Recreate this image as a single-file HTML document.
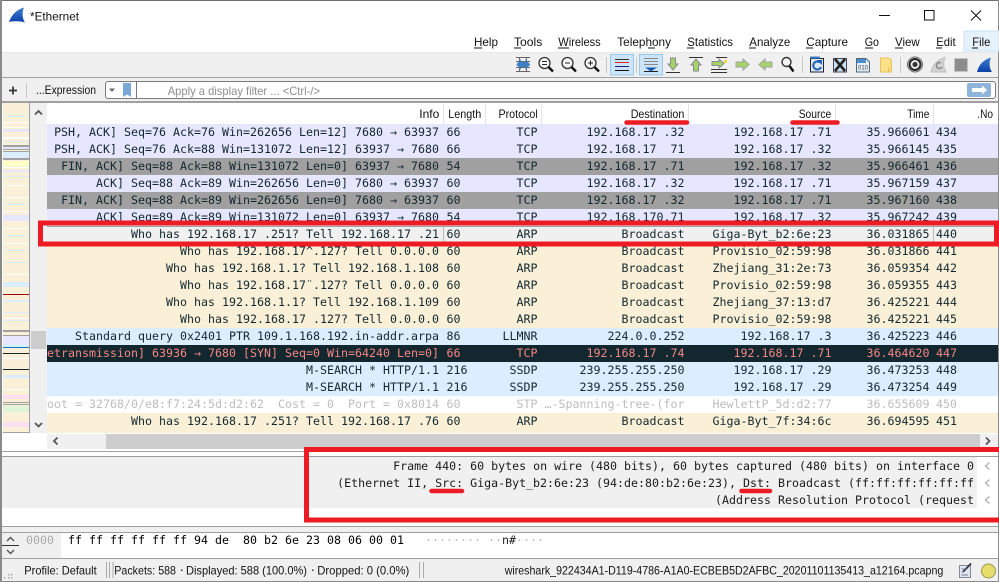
<!DOCTYPE html>
<html><head><meta charset="utf-8"><title>*Ethernet</title>
<style>
html,body{margin:0;padding:0;background:#fff}
#w{position:relative;width:999px;height:582px;overflow:hidden;background:#fff;font-family:"DejaVu Sans Mono","Liberation Mono",monospace;font-size:11.63px;color:#12272e}
.b{position:absolute}
.r{position:absolute;left:47px;width:951px;height:17px;overflow:hidden;line-height:17px;white-space:pre}
.r span{position:absolute;top:0;white-space:pre}
.i{right:559px}.l{left:399.5px}.p{right:460.5px}.d{right:313.5px}.s{right:166.5px}.t{right:68.5px}.n{left:889px}
.tc{background:#e7e6ff}.gr{background:#a0a0a0}.se{background:#f0f0f0;box-shadow:inset 0 1px 0 #a0a0a0}.ar{background:#faf0d7}.ud{background:#daeeff}.da{background:#12272e;color:#f78787}.st{background:#fff;color:#bdbdbd}
.x{position:absolute;white-space:pre;line-height:17px;color:#1a1a1a}
svg{position:absolute;left:0;top:0}
svg text{font-family:"Liberation Sans",sans-serif;font-size:12px;fill:#111}
</style></head><body><div id="w">
<div class="b" style="left:0;top:52px;width:999px;height:25px;background:#f0f0f0;border-top:1px solid #e6e6e6;box-sizing:border-box"></div>
<div class="b" style="left:0;top:77px;width:999px;height:26px;background:#f0f0f0;border-top:1px solid #a0a0a0;border-bottom:2px solid #a0a0a0;box-sizing:border-box"></div>
<div class="b" style="left:105px;top:81px;width:891px;height:18px;background:#fff;border:1px solid #7a7a7a;border-radius:3px;box-sizing:border-box"></div>
<div class="b" style="left:30px;top:103px;width:17px;height:330px;background:#f0f0f0"></div>
<div class="b" style="left:31px;top:331px;width:15px;height:18px;background:#cdcdcd"></div>
<div class="b" style="left:47px;top:434px;width:951px;height:15px;background:#f0f0f0"></div>
<div class="b" style="left:106px;top:434px;width:874px;height:15px;background:#cdcdcd"></div>
<div class="b" style="left:0;top:451px;width:999px;height:1px;background:#a0a0a0"></div>
<div class="b" style="left:0;top:456px;width:999px;height:1px;background:#9a9aa0"></div>
<div class="b" style="left:2px;top:457px;width:975px;height:51px;background:#f0f0f0"></div>
<div class="b" style="left:0;top:526px;width:999px;height:7px;background:#f0f0f0;border-top:1px solid #a0a0a0;border-bottom:1px solid #a0a0a0;box-sizing:border-box"></div>
<div class="b" style="left:2px;top:533px;width:59px;height:25px;background:#f0f0f0"></div>
<div class="b" style="left:0;top:558px;width:999px;height:24px;background:#f0f0f0;border-top:1px solid #a0a0a0;border-bottom:1px solid #8a8a8a;box-sizing:border-box"></div>

<div class="r tc" style="top:124px"><span class="i">PSH, ACK] Seq=76 Ack=76 Win=262656 Len=12] 7680 → 63937</span><span class="l">66</span><span class="p">TCP</span><span class="d">192.168.17 .32</span><span class="s">192.168.17 .71</span><span class="t">35.966061</span><span class="n">434</span></div>
<div class="r tc" style="top:141px"><span class="i">PSH, ACK] Seq=76 Ack=88 Win=131072 Len=12] 63937 → 7680</span><span class="l">66</span><span class="p">TCP</span><span class="d">192.168.17  71</span><span class="s">192.168.17 .32</span><span class="t">35.966145</span><span class="n">435</span></div>
<div class="r gr" style="top:158px"><span class="i">FIN, ACK] Seq=88 Ack=88 Win=131072 Len=0] 63937 → 7680</span><span class="l">54</span><span class="p">TCP</span><span class="d">192.168.17 .71</span><span class="s">192.168.17 .32</span><span class="t">35.966461</span><span class="n">436</span></div>
<div class="r tc" style="top:175px"><span class="i">ACK] Seq=88 Ack=89 Win=262656 Len=0] 7680 → 63937</span><span class="l">60</span><span class="p">TCP</span><span class="d">192.168.17 .32</span><span class="s">192.168.17 .71</span><span class="t">35.967159</span><span class="n">437</span></div>
<div class="r gr" style="top:192px"><span class="i">FIN, ACK] Seq=88 Ack=89 Win=262656 Len=0] 7680 → 63937</span><span class="l">60</span><span class="p">TCP</span><span class="d">192.168.17 .32</span><span class="s">192.168.17 .71</span><span class="t">35.967160</span><span class="n">438</span></div>
<div class="r tc" style="top:209px"><span class="i">ACK] Seq=89 Ack=89 Win=131072 Len=0] 63937 → 7680</span><span class="l">54</span><span class="p">TCP</span><span class="d">192.168.170.71</span><span class="s">192.168.17 .32</span><span class="t">35.967242</span><span class="n">439</span></div>
<div class="r se" style="top:226px"><span class="i">Who has 192.168.17 .251? Tell 192.168.17 .21</span><span class="l">60</span><span class="p">ARP</span><span class="d">Broadcast</span><span class="s">Giga-Byt_b2:6e:23</span><span class="t">36.031865</span><span class="n">440</span></div>
<div class="r ar" style="top:243px"><span class="i">Who has 192.168.17^.127? Tell 0.0.0.0</span><span class="l">60</span><span class="p">ARP</span><span class="d">Broadcast</span><span class="s">Provisio_02:59:98</span><span class="t">36.031866</span><span class="n">441</span></div>
<div class="r ar" style="top:260px"><span class="i">Who has 192.168.1.1? Tell 192.168.1.108</span><span class="l">60</span><span class="p">ARP</span><span class="d">Broadcast</span><span class="s">Zhejiang_31:2e:73</span><span class="t">36.059354</span><span class="n">442</span></div>
<div class="r ar" style="top:277px"><span class="i">Who has 192.168.17¨.127? Tell 0.0.0.0</span><span class="l">60</span><span class="p">ARP</span><span class="d">Broadcast</span><span class="s">Provisio_02:59:98</span><span class="t">36.059355</span><span class="n">443</span></div>
<div class="r ar" style="top:294px"><span class="i">Who has 192.168.1.1? Tell 192.168.1.109</span><span class="l">60</span><span class="p">ARP</span><span class="d">Broadcast</span><span class="s">Zhejiang_37:13:d7</span><span class="t">36.425221</span><span class="n">444</span></div>
<div class="r ar" style="top:311px"><span class="i">Who has 192.168.17 .127? Tell 0.0.0.0</span><span class="l">60</span><span class="p">ARP</span><span class="d">Broadcast</span><span class="s">Provisio_02:59:98</span><span class="t">36.425221</span><span class="n">445</span></div>
<div class="r ud" style="top:328px"><span class="i">Standard query 0x2401 PTR 109.1.168.192.in-addr.arpa</span><span class="l">86</span><span class="p">LLMNR</span><span class="d">224.0.0.252</span><span class="s">192.168.17 .3</span><span class="t">36.425223</span><span class="n">446</span></div>
<div class="r da" style="top:345px"><span class="i">[TCP Retransmission] 63936 → 7680 [SYN] Seq=0 Win=64240 Len=0]</span><span class="l">66</span><span class="p">TCP</span><span class="d">192.168.17 .74</span><span class="s">192.168.17 .71</span><span class="t">36.464620</span><span class="n">447</span></div>
<div class="r ud" style="top:362px"><span class="i">M-SEARCH * HTTP/1.1</span><span class="l">216</span><span class="p">SSDP</span><span class="d">239.255.255.250</span><span class="s">192.168.17 .29</span><span class="t">36.473253</span><span class="n">448</span></div>
<div class="r ud" style="top:379px"><span class="i">M-SEARCH * HTTP/1.1</span><span class="l">216</span><span class="p">SSDP</span><span class="d">239.255.255.250</span><span class="s">192.168.17 .29</span><span class="t">36.473254</span><span class="n">449</span></div>
<div class="r st" style="top:396px"><span class="i">Root = 32768/0/e8:f7:24:5d:d2:62  Cost = 0  Port = 0x8014</span><span class="l">60</span><span class="p">STP</span><span class="d">…-Spanning-tree-(for</span><span class="s">HewlettP_5d:d2:77</span><span class="t">36.655609</span><span class="n">450</span></div>
<div class="r ar" style="top:413px;height:20px"><span class="i">Who has 192.168.17 .251? Tell 192.168.17 .76</span><span class="l">60</span><span class="p">ARP</span><span class="d">Broadcast</span><span class="s">Giga-Byt_7f:34:6c</span><span class="t">36.694595</span><span class="n">451</span></div>

<div class="x" style="right:25px;top:457.5px">Frame 440: 60 bytes on wire (480 bits), 60 bytes captured (480 bits) on interface 0</div>
<div class="x" style="right:25px;top:474.5px">(Ethernet II, Src: Giga-Byt_b2:6e:23 (94:de:80:b2:6e:23), Dst: Broadcast (ff:ff:ff:ff:ff:ff</div>
<div class="x" style="right:25px;top:491.5px">(Address Resolution Protocol (request</div>
<div class="x" style="left:26px;top:532px;color:#a8a8a8">0000</div>
<div class="x" style="left:68px;top:532px;color:#000">ff ff ff ff ff ff 94 de  80 b2 6e 23 08 06 00 01</div>
<div class="x" style="left:425px;top:532px;color:#b5b5b5">········ ··<span style="color:#222">n#</span>····</div>

<svg width="999" height="582" viewBox="0 0 999 582" xmlns="http://www.w3.org/2000/svg">
<defs><linearGradient id="fin" x1="0" y1="0" x2="0" y2="1"><stop offset="0" stop-color="#3f7fd0"/><stop offset="1" stop-color="#0a3fa8"/></linearGradient></defs>
<!-- window border -->
<rect x="0" y="0" width="999" height="1" fill="#6f6f6f"/><rect x="0" y="0" width="2" height="582" fill="#8a8a8a"/><rect x="998" y="0" width="1" height="582" fill="#8a8a8a"/>
<!-- title -->
<path d="M9 22C12 14 17 9.500 24 7.500C22 12 22 18 25 22.500C20 21 14 21 9 22Z" fill="url(#fin)"/>
<text x="30" y="20.500" textLength="49" lengthAdjust="spacingAndGlyphs">*Ethernet</text>
<path d="M879 15.500H890" stroke="#111"/><rect x="924.500" y="10.500" width="9.500" height="9.500" fill="none" stroke="#111"/><path d="M971 10.500L981 20.500M981 10.500L971 20.500" stroke="#111" fill="none"/>
<!-- menu -->
<rect x="964" y="31" width="35" height="20" fill="#e5f1fb" stroke="#cce4f7"/>
<g>
<text x="474" y="46" textLength="24" lengthAdjust="spacingAndGlyphs">Help</text><rect x="474" y="47.500" width="8" height="1" fill="#111"/>
<text x="514" y="46" textLength="28.300" lengthAdjust="spacingAndGlyphs">Tools</text><rect x="514" y="47.500" width="7" height="1" fill="#111"/>
<text x="558.300" y="46" textLength="42.400" lengthAdjust="spacingAndGlyphs">Wireless</text><rect x="558" y="47.500" width="11" height="1" fill="#111"/>
<text x="617.300" y="46" textLength="53.700" lengthAdjust="spacingAndGlyphs">Telephony</text><rect x="648" y="47.500" width="7" height="1" fill="#111"/>
<text x="687.300" y="46" textLength="45.700" lengthAdjust="spacingAndGlyphs">Statistics</text><rect x="687" y="47.500" width="7" height="1" fill="#111"/>
<text x="749.300" y="46" textLength="41" lengthAdjust="spacingAndGlyphs">Analyze</text><rect x="749" y="47.500" width="7" height="1" fill="#111"/>
<text x="806.300" y="46" textLength="41.700" lengthAdjust="spacingAndGlyphs">Capture</text><rect x="806" y="47.500" width="7" height="1" fill="#111"/>
<text x="864.700" y="46" textLength="14.300" lengthAdjust="spacingAndGlyphs">Go</text><rect x="865" y="47.500" width="8" height="1" fill="#111"/>
<text x="895" y="46" textLength="24.700" lengthAdjust="spacingAndGlyphs">View</text><rect x="895" y="47.500" width="8" height="1" fill="#111"/>
<text x="936.300" y="46" textLength="19.400" lengthAdjust="spacingAndGlyphs">Edit</text><rect x="936" y="47.500" width="6" height="1" fill="#111"/>
<text x="972.300" y="46" textLength="18" lengthAdjust="spacingAndGlyphs">File</text><rect x="972" y="47.500" width="6" height="1" fill="#111"/>
</g>
<!-- toolbar -->
<g fill="none" stroke="#222" stroke-width="1">
<path d="M516 57.500H530M516 71.500H530M516 61.500H530M516 67.500H530M519.500 57V72M526.500 57V72" stroke="#666"/>
<path d="M517 64.500L520.500 60.500V68.500ZM529.500 64.500L526 60.500V68.500Z" fill="#3f7fc4" stroke="#3f7fc4"/><rect x="520.500" y="62" width="6" height="5" fill="#3f7fc4" stroke="none"/>
<circle cx="544.500" cy="63" r="5.500" stroke="#333" stroke-width="1.300" fill="#f8f8f8"/><path d="M548.500 67L553 71.500" stroke="#111" stroke-width="2.400"/><path d="M542 61.500H547M542 64.500H547"/>
<circle cx="567.500" cy="63" r="5.500" stroke="#333" stroke-width="1.300" fill="#f8f8f8"/><path d="M571.500 67L576 71.500" stroke="#111" stroke-width="2.400"/><path d="M565 63H570"/>
<circle cx="590.500" cy="63" r="5.500" stroke="#333" stroke-width="1.300" fill="#f8f8f8"/><path d="M594.500 67L599 71.500" stroke="#111" stroke-width="2.400"/><path d="M588 63H593M590.500 60.500V65.500"/>
</g>
<path d="M606.500 57V73M636.500 57V73M802.500 57V73M900.500 57V73" stroke="#c8c8c8"/>
<rect x="610.500" y="54.500" width="23" height="20.500" fill="#cce4f7" stroke="#99c8ee"/>
<path d="M615 59.500H629" stroke="#333"/><path d="M615 62.500H629" stroke="#e02020"/><path d="M615 66.500H629" stroke="#202080"/><path d="M615 70.500H629" stroke="#111"/>
<rect x="639.500" y="54.500" width="23" height="20.500" fill="#cce4f7" stroke="#99c8ee"/>
<path d="M644 58.500H658M644 61.500H658M644 64.500H658" stroke="#8a8a8a"/><path d="M644 71.500H658" stroke="#222"/><path d="M645 67.500H657L651 71.500Z" fill="#1a5bb0"/>
<!-- go down/up -->
<path d="M670.500 58H675.500V64H678L673 70L668 64H670.500Z" fill="#a4d36a" stroke="#8a8a8a"/><path d="M666 72.500H680" stroke="#333"/>
<path d="M696 59L701 65H698.500V71H693.500V65H691Z" fill="#a4d36a" stroke="#8a8a8a"/><path d="M689 57.500H703" stroke="#333"/>
<!-- goto -->
<path d="M711 69.500H727M711 72.500H727M716 57.500H727" stroke="#333"/>
<path d="M712 61.500H719V59L724 63.500L719 68V65.500H712Z" fill="#a4d36a" stroke="#8a8a8a"/><rect x="724" y="60" width="3" height="3" fill="#f5d84a"/>
<!-- next/prev -->
<path d="M736 62H743V59L749 64.500L743 70V67H736Z" fill="#a4d36a" stroke="#a0a0a0"/>
<path d="M772 62H765V59L759 64.500L765 70V67H772Z" fill="#a4d36a" stroke="#a0a0a0"/>
<!-- find -->
<circle cx="786.500" cy="62" r="4.500" fill="#f4f4f4" stroke="#333" stroke-width="1.400"/><path d="M789.500 66L793.500 71.500" stroke="#111" stroke-width="2.400"/>
<!-- reload -->
<rect x="810.500" y="58.500" width="13" height="13.500" fill="#dbe9f6" stroke="#223"/><path d="M810 57.500H820" stroke="#3f7fc8" stroke-width="2"/>
<path d="M820 62.500A4 4 0 1 0 821 67" fill="none" stroke="#1f5fb5" stroke-width="2"/><path d="M817 60H822V65Z" fill="#1f5fb5"/>
<!-- close -->
<rect x="833.500" y="58.500" width="13" height="13.500" fill="#cfe2f4" stroke="#445"/><path d="M835 59L845 71M845 59L835 71" stroke="#222" stroke-width="2.600"/>
<!-- save -->
<path d="M856.500 58.500H866L869.500 62V72H856.500Z" fill="#e4eff9" stroke="#567"/><path d="M857 59H866V63H857Z" fill="#4b8fd3"/><text x="858" y="69.500" style="font-size:6px;fill:#444" textLength="10">010</text>
<!-- open -->
<path d="M880.500 58H889L891.500 60V72H880.500Z" fill="#fde08a" stroke="#e8c35a"/><path d="M889 67V72" stroke="#e0b440"/>
<!-- options gear -->
<circle cx="915" cy="64.500" r="7.500" fill="#e8e8e8" stroke="#666"/><circle cx="915" cy="64.500" r="5.500" fill="none" stroke="#222" stroke-width="2"/><circle cx="915" cy="64.500" r="2.500" fill="#333"/>
<!-- restart -->
<path d="M931 72C933 64 938 59.500 945 57.500C943 62 943 68 946 72Z" fill="#d4d4d4" stroke="#bdbdbd"/><path d="M941 63A3 3 0 1 0 942 67" fill="none" stroke="#888" stroke-width="1.500"/>
<!-- stop -->
<rect x="954.500" y="58.500" width="13" height="13" fill="#8c8c8c" stroke="#c4c4c4"/>
<!-- start -->
<path d="M977 72C979 64 984 59.500 991 57.500C989 62 989 68 992 72Z" fill="url(#fin)"/>
<!-- filter bar -->
<path d="M9 90.500H17M13 86.500V94.500" stroke="#333" stroke-width="1.700"/><path d="M26.500 83V98" stroke="#c8c8c8"/>
<text x="36" y="94" textLength="60" lengthAdjust="spacingAndGlyphs">...Expression</text>
<path d="M109 88.500H115L112 92Z" fill="#666"/>
<path d="M123 83H131V97L127 94.500L123 97Z" fill="#7ba7d7"/>
<path d="M136.500 82V98" stroke="#7a7a7a"/>
<text x="167.700" y="95" textLength="152.300" lengthAdjust="spacingAndGlyphs" style="fill:#8e8e8e">Apply a display filter ... &lt;Ctrl-/&gt;</text>
<rect x="967" y="83" width="24" height="14" rx="2" fill="#8fb4dc"/><path d="M972 88H982V85.500L987 90L982 94.500V92H972Z" fill="#fff"/>
<!-- packet header -->
<text x="419.300" y="118" textLength="20" lengthAdjust="spacingAndGlyphs">Info</text>
<text x="448.300" y="118" textLength="33" lengthAdjust="spacingAndGlyphs">Length</text>
<text x="498.500" y="118" textLength="39.200" lengthAdjust="spacingAndGlyphs">Protocol</text>
<text x="630.700" y="118" textLength="53.600" lengthAdjust="spacingAndGlyphs">Destination</text>
<text x="798.700" y="118" textLength="32.600" lengthAdjust="spacingAndGlyphs">Source</text>
<text x="907.300" y="118" textLength="22" lengthAdjust="spacingAndGlyphs">Time</text>
<text x="977.300" y="118" textLength="15.700" lengthAdjust="spacingAndGlyphs">.No</text>
<path d="M443.500 104V124M485.500 104V124M541.500 104V124M688.500 104V124M835.500 104V124M933.500 104V124" stroke="#e5e5e5"/>
<path d="M443.500 227V243M933.500 227V243" stroke="#bbb"/>
<!-- minimap -->
<rect x="3" y="103" width="26" height="330" fill="#faf0d7"/>
<g fill="#fff"><rect x="3" y="122" width="26" height="1"/><rect x="3" y="127" width="26" height="1"/><rect x="3" y="137" width="26" height="2"/><rect x="3" y="167" width="26" height="1"/><rect x="3" y="185" width="26" height="1"/><rect x="3" y="197" width="26" height="1"/><rect x="3" y="211" width="26" height="1"/><rect x="3" y="228" width="26" height="1"/><rect x="3" y="243" width="26" height="1"/><rect x="3" y="274" width="26" height="1"/><rect x="3" y="318" width="26" height="1"/><rect x="3" y="358" width="26" height="1"/><rect x="3" y="389" width="26" height="1"/></g>
<g fill="#daeeff"><rect x="3" y="116" width="26" height="1"/><rect x="3" y="141" width="26" height="1"/><rect x="3" y="152" width="26" height="6"/><rect x="3" y="176" width="26" height="1"/><rect x="3" y="204" width="26" height="1"/><rect x="3" y="235" width="26" height="1"/><rect x="3" y="250" width="26" height="1"/><rect x="3" y="262" width="26" height="1"/><rect x="3" y="282" width="26" height="5"/><rect x="3" y="300" width="26" height="2"/><rect x="3" y="312" width="26" height="1"/><rect x="3" y="320" width="26" height="1"/><rect x="3" y="344" width="26" height="3"/><rect x="3" y="375" width="26" height="3"/></g>
<g fill="#e7e6ff"><rect x="3" y="129" width="26" height="3"/><rect x="3" y="147" width="26" height="2"/><rect x="3" y="170" width="26" height="2"/><rect x="3" y="215" width="26" height="6"/><rect x="3" y="336" width="26" height="8"/></g>
<g fill="#a0a0a0"><rect x="3" y="145" width="26" height="2"/><rect x="3" y="149" width="26" height="1"/><rect x="3" y="151" width="26" height="1"/><rect x="3" y="158" width="26" height="2"/><rect x="3" y="330" width="26" height="2"/><rect x="3" y="335" width="26" height="1"/><rect x="3" y="402" width="26" height="1"/><rect x="3" y="404" width="26" height="1"/></g>
<rect x="3" y="161" width="26" height="5" fill="#ffffc8"/>
<rect x="3" y="294" width="26" height="1" fill="#a00000"/><rect x="3" y="347" width="26" height="1" fill="#0078c8"/><rect x="3" y="353" width="26" height="1" fill="#12272e"/><rect x="3" y="369" width="26" height="1" fill="#12272e"/>
<rect x="3" y="395" width="26" height="4" fill="#fbe0f4"/><rect x="3" y="406" width="26" height="6" fill="#e0f5d8"/><rect x="3" y="422" width="26" height="5" fill="#fbe0f4"/>
<path d="M29.500 103V433M3 432.500H30" stroke="#a0a0a0"/>
<!-- scroll arrows -->
<g fill="none" stroke="#555" stroke-width="1.800"><path d="M35 114.500L38.500 111L42 114.500"/><path d="M35 423L38.500 426.500L42 423"/><path d="M57.500 437.500L54 441L57.500 444.500"/><path d="M986 437.500L989.500 441L986 444.500"/></g>
<g fill="none" stroke="#bbb" stroke-width="1.500"><path d="M989.500 462.500L985.500 466L989.500 469.500"/><path d="M989.500 479.500L985.500 483L989.500 486.500"/><path d="M989.500 496.500L985.500 500L989.500 503.500"/></g>
<g fill="none" stroke="#555" stroke-width="1.400"><path d="M7 541L10.500 537.500L14 541"/><path d="M7 550L10.500 553.500L14 550"/></g><path d="M2 545.500H19" stroke="#333"/>
<!-- status -->
<g fill="#aaa"><rect x="11" y="574" width="1.500" height="1.500"/><rect x="8" y="577" width="1.500" height="1.500"/><rect x="4" y="577" width="1.500" height="1.500"/><rect x="8" y="574" width="1.500" height="1.500"/><rect x="11" y="577" width="1.500" height="1.500"/></g>
<text x="24.300" y="574.700" textLength="72.400" lengthAdjust="spacingAndGlyphs">Profile: Default</text>
<path d="M106.500 562V578M109.500 562V578M113 562V578M419.500 562V578M423.500 562V578" stroke="#aaa"/>
<text x="114.300" y="574.700" textLength="61.700" lengthAdjust="spacingAndGlyphs">Packets: 588</text>
<rect x="181" y="569.500" width="1.500" height="1.500" fill="#333"/>
<text x="186" y="574.700" textLength="121" lengthAdjust="spacingAndGlyphs">Displayed: 588 (100.0%)</text>
<rect x="312" y="569.500" width="1.500" height="1.500" fill="#333"/>
<text x="317.300" y="574.700" textLength="92" lengthAdjust="spacingAndGlyphs">Dropped: 0 (0.0%)</text>
<text x="504.700" y="574.700" textLength="438.600" lengthAdjust="spacingAndGlyphs">wireshark_922434A1-D119-4786-A1A0-ECBEB5D2AFBC_20201101135413_a12164.pcapng</text>
<rect x="959.500" y="565.500" width="11" height="12" fill="#dfe8f2" stroke="#889"/><path d="M963 572L971 563.500" stroke="#334" stroke-width="1.800"/><path d="M961.500 569H966M961.500 572H964M961.500 575H968" stroke="#778"/>
<circle cx="988.500" cy="571" r="7" fill="#e6dc6a" stroke="#9a9a50"/>
<!-- annotations -->
<g fill="none" stroke="#ed1c24">
<rect x="40.500" y="223" width="956" height="21" stroke-width="5"/>
<rect x="306.500" y="449.500" width="695" height="70.500" stroke-width="5"/>
<path d="M626.500 122.500H687M792.500 122.500H837.500M431.500 491H462M741.500 491H770" stroke-width="4.500" stroke-linecap="round"/>
</g>
</svg>
</div></body></html>
